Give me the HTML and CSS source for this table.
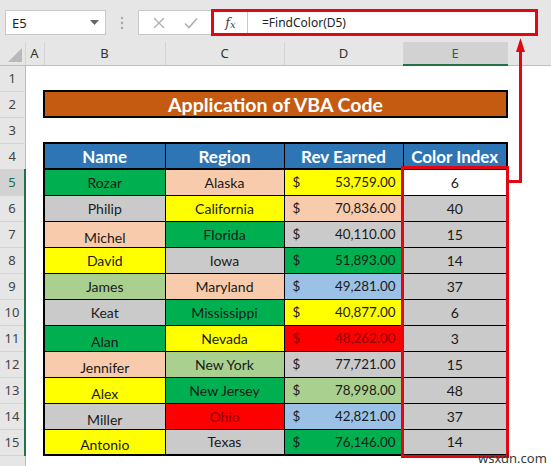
FILE: index.html
```html
<!DOCTYPE html>
<html>
<head>
<meta charset="utf-8">
<link rel="stylesheet" href="styles.css">
</head>
<body>
<div class="toolbar">
  <div class="namebox"><span>E5</span><svg class="caret" width="9" height="5" viewBox="0 0 9 5"><path d="M0 0H9L4.5 5Z" fill="#666"/></svg></div>
  <div class="dots"><svg width="4" height="14" viewBox="0 0 4 14"><circle cx="2" cy="2" r="1.2" fill="#a6a6a6"/><circle cx="2" cy="7" r="1.2" fill="#a6a6a6"/><circle cx="2" cy="12" r="1.2" fill="#a6a6a6"/></svg></div>
  <div class="btns">
    <svg width="12" height="12" viewBox="0 0 12 12"><path d="M1 1L11 11M11 1L1 11" stroke="#b0b0b0" stroke-width="1.4" fill="none"/></svg>
    <svg width="14" height="12" viewBox="0 0 14 12"><path d="M1 6.5L5 10.5L13 1.5" stroke="#b0b0b0" stroke-width="1.6" fill="none"/></svg>
  </div>
  <div class="fbox">
    <div class="fx">f<span class="fxx">x</span></div>
    <div class="formula">=FindColor(D5)</div>
  </div>
</div>

<table class="sheet">
  <colgroup>
    <col class="c-rh"><col class="c-a"><col class="c-b"><col class="c-c"><col class="c-d"><col class="c-e"><col class="c-f">
  </colgroup>
  <tr class="hdr">
    <th class="corner"><span class="tri"></span></th>
    <th>A</th><th>B</th><th>C</th><th>D</th><th class="sel">E</th><th class="blank"></th>
  </tr>
  <tr><th class="rh">1</th><td></td><td></td><td></td><td></td><td></td><td></td></tr>
  <tr><th class="rh">2</th><td></td><td colspan="4" class="title">Application of VBA Code</td><td></td></tr>
  <tr><th class="rh">3</th><td></td><td></td><td></td><td></td><td></td><td></td></tr>
  <tr class="th-row"><th class="rh">4</th><td></td><td class="h l">Name</td><td class="h">Region</td><td class="h">Rev Earned</td><td class="h r">Color Index</td><td></td></tr>

  <tr><th class="rh act">5</th><td></td><td class="d l green">Rozar</td><td class="d peach">Alaska</td><td class="d num yellow"><span>$</span><span>53,759.00</span></td><td class="d r white">6</td><td></td></tr>
  <tr><th class="rh gs">6</th><td></td><td class="d l gray">Philip</td><td class="d yellow">California</td><td class="d num peach"><span>$</span><span>70,836.00</span></td><td class="d r gray">40</td><td></td></tr>
  <tr><th class="rh gs">7</th><td></td><td class="d l peach low">Michel</td><td class="d green">Florida</td><td class="d num gray"><span>$</span><span>40,110.00</span></td><td class="d r gray">15</td><td></td></tr>
  <tr><th class="rh gs">8</th><td></td><td class="d l yellow">David</td><td class="d gray">Iowa</td><td class="d num green"><span>$</span><span>51,893.00</span></td><td class="d r gray">14</td><td></td></tr>
  <tr><th class="rh gs">9</th><td></td><td class="d l lgreen">James</td><td class="d peach">Maryland</td><td class="d num lblue"><span>$</span><span>49,281.00</span></td><td class="d r gray">37</td><td></td></tr>
  <tr><th class="rh gs">10</th><td></td><td class="d l gray">Keat</td><td class="d green">Mississippi</td><td class="d num yellow"><span>$</span><span>40,877.00</span></td><td class="d r gray">6</td><td></td></tr>
  <tr><th class="rh gs">11</th><td></td><td class="d l green low">Alan</td><td class="d yellow">Nevada</td><td class="d num red"><span>$</span><span>48,262.00</span></td><td class="d r gray">3</td><td></td></tr>
  <tr><th class="rh gs">12</th><td></td><td class="d l peach low">Jennifer</td><td class="d lgreen">New York</td><td class="d num gray"><span>$</span><span>77,721.00</span></td><td class="d r gray">15</td><td></td></tr>
  <tr><th class="rh gs">13</th><td></td><td class="d l yellow low">Alex</td><td class="d green">New Jersey</td><td class="d num lgreen"><span>$</span><span>78,998.00</span></td><td class="d r gray">48</td><td></td></tr>
  <tr><th class="rh gs">14</th><td></td><td class="d l gray low">Miller</td><td class="d red">Ohio</td><td class="d num lblue"><span>$</span><span>42,821.00</span></td><td class="d r gray">37</td><td></td></tr>
  <tr class="lastrow"><th class="rh gs">15</th><td></td><td class="d l yellow low">Antonio</td><td class="d gray">Texas</td><td class="d num green"><span>$</span><span>76,146.00</span></td><td class="d r gray">14</td><td></td></tr>
  <tr class="tail"><th class="rh"></th><td></td><td></td><td></td><td></td><td></td><td></td></tr>
</table>

<div class="hl"></div>
<svg class="arrow" width="30" height="160" viewBox="500 30 30 160">
  <path d="M507 181.5H520.5V50" stroke="#e30613" stroke-width="3" fill="none"/>
  <path d="M516 52L520.5 38L525 52Z" fill="#e30613"/>
</svg>
<div class="wm">wsxdn.com</div>
</body>
</html>
```

FILE: styles.css
```css
* { box-sizing: border-box; }
html, body { margin: 0; padding: 0; }
body {
  width: 551px;
  height: 466px;
  overflow: hidden;
  background: #fff;
  position: relative;
  font-family: Lato, "Open Sans", sans-serif;
}

/* formula bar */
.toolbar {
  height: 42px;
  background: #e6e6e6;
  display: flex;
  align-items: flex-start;
  padding: 10px 0 0 5px;
}
.namebox {
  width: 101px;
  height: 25px;
  background: #fff;
  border: 1px solid #c8c8c8;
  display: flex;
  align-items: center;
  justify-content: space-between;
  padding: 0 6px 0 6px;
  font-family: "Noto Sans", sans-serif;
  font-size: 13px;
  color: #222;
}
.dots {
  width: 32px;
  height: 25px;
  display: flex;
  align-items: center;
  justify-content: center;
}
.btns {
  width: 73px;
  height: 25px;
  background: #fff;
  border: 1px solid #c8c8c8;
  border-right: none;
  display: flex;
  align-items: center;
  justify-content: space-around;
  padding: 0 4px;
}
.fbox {
  width: 327px;
  height: 27px;
  margin-top: -1px;
  border: 3px solid #e30613;
  background: #fff;
  display: flex;
  align-items: stretch;
}
.fx {
  width: 34px;
  border-right: 1px solid #c8c8c8;
  display: flex;
  align-items: center;
  justify-content: center;
  font-family: "DejaVu Serif", "Liberation Serif", serif;
  font-style: italic;
  font-size: 13px;
  color: #444;
}
.fxx { font-size: 10px; margin-top: 3px; }
.formula {
  padding-left: 14px;
  display: flex;
  align-items: center;
  font-family: "Noto Sans", sans-serif;
  font-size: 12px;
  color: #222;
}

/* sheet */
.sheet {
  border-collapse: collapse;
  table-layout: fixed;
  width: 551px;
}
.c-rh { width: 25px; }
.c-a { width: 19px; }
.c-b { width: 121px; }
.c-c { width: 119px; }
.c-d { width: 119px; }
.c-e { width: 104px; }
.c-f { width: 44px; }

.sheet tr { height: 26px; }
.sheet td, .sheet th { padding: 0; }

.hdr { height: 23px !important; }
.hdr th {
  background: #e6e6e6;
  font-family: "Noto Sans", sans-serif;
  font-weight: normal;
  font-size: 13px;
  color: #333;
  border-right: 1px solid #d4d4d4;
  border-bottom: 1px solid #bdbdbd;
  height: 23px;
}
.hdr th.sel {
  background: #d2d2d2;
  color: #1e6b40;
  border-bottom: 2px solid #217346;
}
.hdr th.blank { border-right: none; }
.corner { position: relative; }
.tri {
  position: absolute;
  right: 3px;
  bottom: 3px;
  width: 0;
  height: 0;
  border-left: 14px solid transparent;
  border-bottom: 14px solid #b9b9b9;
}

.rh {
  background: #e6e6e6;
  font-family: "Noto Sans", sans-serif;
  font-weight: normal;
  font-size: 13px;
  color: #444;
  border-right: 1px solid #bdbdbd;
  border-bottom: 1px solid #d4d4d4;
  text-align: center;
  height: 26px;
}
.rh.act {
  background: #d2d2d2;
  color: #1e6b40;
  border-right: 2px solid #217346;
}
.rh.gs { border-right: 2px solid #217346; }
.tail .rh { border-bottom: none; }

/* title */
.title {
  background: #c55a11;
  border: 2px solid #000;
  color: #fff;
  font-weight: 700;
  font-size: 19.5px;
  text-align: center;
}

/* data table */
.h {
  background: #2e75b6;
  color: #fff;
  font-weight: 700;
  font-size: 17px;
  text-align: center;
  border: 1px solid #000;
  border-top: 2px solid #000;
  border-bottom: 2px solid #000;
}
.d {
  border: 1px solid #000;
  text-align: center;
  font-size: 14px;
  color: #1a1a1a;
}
.l { border-left: 2px solid #000 !important; }
.r { border-right: 2px solid #000 !important; }
.lastrow .d { border-bottom: 2px solid #000; }
.low { vertical-align: bottom; padding-bottom: 1px !important; }

.num { font-size: 13.4px; }
.num span:first-child { float: left; padding-left: 8px; }
.num span:last-child { float: right; padding-right: 7px; }

.green { background: #00b050; }
.peach { background: #f8cbad; }
.gray { background: #cacaca; }
.yellow { background: #ffff00; }
.lgreen { background: #a9d08e; }
.lblue { background: #9bc2e6; }
.red { background: #ff0000; color: #8b0000; }
.white { background: #fff; }

/* overlays */
.hl {
  position: absolute;
  left: 401px;
  top: 166px;
  width: 108px;
  height: 292px;
  border: 3px solid #e30613;
}
.arrow {
  position: absolute;
  left: 500px;
  top: 30px;
}
.wm {
  position: absolute;
  left: 478px;
  top: 451px;
  line-height: 14px;
  font-family: "Noto Sans", sans-serif;
  font-size: 13px;
  color: #3a3a3a;
}
```
